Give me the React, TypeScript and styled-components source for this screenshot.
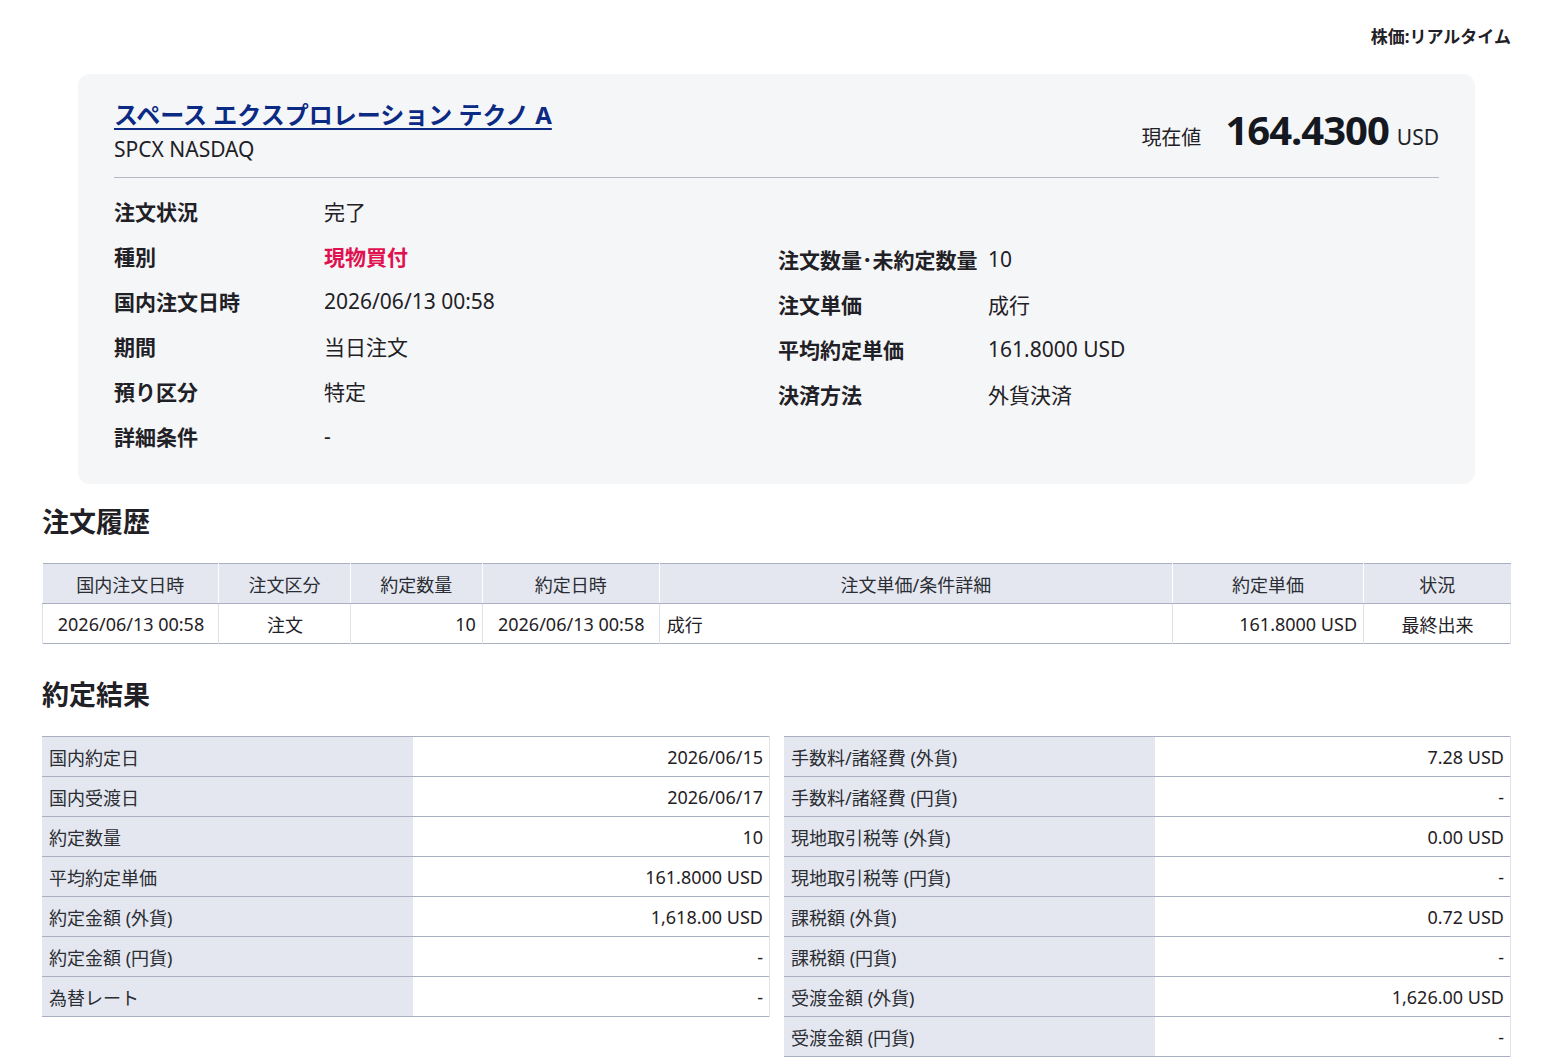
import React from "react";
import styled, { createGlobalStyle } from "styled-components";

const Global = createGlobalStyle`
  html, body { margin: 0; padding: 0; background: #ffffff; }
  body {
    font-family: "Noto Sans", "Noto Sans CJK JP", sans-serif;
    color: #1f2126;
  }
  * { box-sizing: border-box; }
`;

const Page = styled.div`
  padding: 23px 38px 0 42px;
`;

const TopBar = styled.div`
  display: flex;
  justify-content: flex-end;
  font-size: 17px;
  font-weight: 700;
  line-height: 28px;
  color: #1f2126;
`;

const Card = styled.section`
  margin: 23px 36px 0;
  background: #f5f6f8;
  border-radius: 12px;
  padding: 24px 36px 26px;
`;

const CardHead = styled.div`
  display: flex;
  justify-content: space-between;
  align-items: center;
  padding-bottom: 14px;
  border-bottom: 1px solid #b6b9c2;
`;

const NameBlock = styled.div`
  display: flex;
  flex-direction: column;
`;

const StockName = styled.a`
  font-size: 24px;
  font-weight: 700;
  line-height: 34px;
  color: #0b2a84;
  text-decoration: underline;
  text-underline-offset: 4px;
  text-decoration-thickness: 2px;
  cursor: pointer;
`;

const Ticker = styled.div`
  font-size: 21px;
  line-height: 28px;
  margin-top: 3px;
  color: #1f2126;
`;

const PriceBlock = styled.div`
  display: flex;
  align-items: baseline;
  margin-top: -3px;
`;

const PriceLabel = styled.span`
  font-size: 20px;
  margin-right: 24px;
`;

const PriceValue = styled.span`
  font-size: 40px;
  font-weight: 700;
  letter-spacing: -1px;
  color: #141821;
`;

const PriceUnit = styled.span`
  font-size: 21px;
  margin-left: 8px;
`;

const InfoGrid = styled.div`
  display: grid;
  grid-template-columns: 664px 1fr;
  padding-top: 10px;
`;

const InfoCol = styled.div<{ $offset?: number }>`
  display: flex;
  flex-direction: column;
  padding-top: ${(p) => p.$offset ?? 0}px;
`;

const InfoRow = styled.div`
  display: grid;
  grid-template-columns: 210px 1fr;
  align-items: center;
  height: 45px;
  font-size: 21px;
`;

const InfoLabel = styled.div`
  font-weight: 700;
  white-space: nowrap;
`;

const InfoValue = styled.div<{ $accent?: boolean }>`
  color: ${(p) => (p.$accent ? "#e0114f" : "#1f2126")};
  font-weight: ${(p) => (p.$accent ? 700 : 400)};
`;

const SectionTitle = styled.h2<{ $top: number }>`
  margin: ${(p) => p.$top}px 0 23px;
  font-size: 27px;
  font-weight: 700;
  line-height: 36px;
  color: #1f2126;
`;

const HistoryTable = styled.table`
  width: 100%;
  border-collapse: collapse;
  font-size: 18px;
  border-top: 1px solid #a9afc1;
  border-bottom: 1px solid #a9afc1;
`;

const Th = styled.th`
  background: #e4e7ef;
  font-weight: 400;
  height: 40px;
  padding: 0 6px;
  color: #2a2d33;
  border-bottom: 1px solid #a9afc1;
  border-left: 1px solid #ffffff;
  &:first-child { border-left: none; }
`;

const Td = styled.td<{ $align?: "left" | "center" | "right" }>`
  height: 40px;
  padding: 0 6px 0 7px;
  text-align: ${(p) => p.$align ?? "center"};
  border-left: 1px solid #dfe2e9;
  &:first-child { border-left: 1px solid #dfe2e9; }
  &:last-child { border-right: 1px solid #dfe2e9; }
  white-space: nowrap;
`;

const ResultGrid = styled.div`
  display: grid;
  grid-template-columns: 728px 727px;
  justify-content: space-between;
  align-items: start;
`;

const ResultTable = styled.table`
  width: 100%;
  border-collapse: collapse;
  font-size: 18px;
  border-top: 1px solid #a9afc1;
`;

const ResultRow = styled.tr`
  border-bottom: 1px solid #a9afc1;
`;

const ResultLabel = styled.th`
  width: 371px;
  background: #e4e7ef;
  font-weight: 400;
  text-align: left;
  height: 40px;
  padding: 0 7px;
  color: #2a2d33;
  white-space: nowrap;
`;

const ResultValue = styled.td`
  text-align: right;
  padding: 0 6px 0 7px;
  height: 40px;
  border-right: 1px solid #dfe2e9;
  white-space: nowrap;
`;

const leftInfo: [string, string, boolean?][] = [
  ["注文状況", "完了"],
  ["種別", "現物買付", true],
  ["国内注文日時", "2026/06/13 00:58"],
  ["期間", "当日注文"],
  ["預り区分", "特定"],
  ["詳細条件", "-"],
];

const rightInfo: [string, string][] = [
  ["注文数量･未約定数量", "10"],
  ["注文単価", "成行"],
  ["平均約定単価", "161.8000 USD"],
  ["決済方法", "外貨決済"],
];

const resultLeft: [string, string][] = [
  ["国内約定日", "2026/06/15"],
  ["国内受渡日", "2026/06/17"],
  ["約定数量", "10"],
  ["平均約定単価", "161.8000 USD"],
  ["約定金額 (外貨)", "1,618.00 USD"],
  ["約定金額 (円貨)", "-"],
  ["為替レート", "-"],
];

const resultRight: [string, string][] = [
  ["手数料/諸経費 (外貨)", "7.28 USD"],
  ["手数料/諸経費 (円貨)", "-"],
  ["現地取引税等 (外貨)", "0.00 USD"],
  ["現地取引税等 (円貨)", "-"],
  ["課税額 (外貨)", "0.72 USD"],
  ["課税額 (円貨)", "-"],
  ["受渡金額 (外貨)", "1,626.00 USD"],
  ["受渡金額 (円貨)", "-"],
];

const historyCols = [176, 132, 132, 177, 514, 191, 147];

function Result({ rows }: { rows: [string, string][] }) {
  return (
    <ResultTable>
      <tbody>
        {rows.map(([l, v]) => (
          <ResultRow key={l}>
            <ResultLabel>{l}</ResultLabel>
            <ResultValue>{v}</ResultValue>
          </ResultRow>
        ))}
      </tbody>
    </ResultTable>
  );
}

export default function App() {
  return (
    <>
      <Global />
      <Page>
        <TopBar>株価:リアルタイム</TopBar>
        <Card>
          <CardHead>
            <NameBlock>
              <StockName>スペース エクスプロレーション テクノ A</StockName>
              <Ticker>SPCX NASDAQ</Ticker>
            </NameBlock>
            <PriceBlock>
              <PriceLabel>現在値</PriceLabel>
              <PriceValue>164.4300</PriceValue>
              <PriceUnit>USD</PriceUnit>
            </PriceBlock>
          </CardHead>
          <InfoGrid>
            <InfoCol>
              {leftInfo.map(([l, v, a]) => (
                <InfoRow key={l}>
                  <InfoLabel>{l}</InfoLabel>
                  <InfoValue $accent={a}>{v}</InfoValue>
                </InfoRow>
              ))}
            </InfoCol>
            <InfoCol $offset={48}>
              {rightInfo.map(([l, v]) => (
                <InfoRow key={l}>
                  <InfoLabel>{l}</InfoLabel>
                  <InfoValue>{v}</InfoValue>
                </InfoRow>
              ))}
            </InfoCol>
          </InfoGrid>
        </Card>

        <SectionTitle $top={20}>注文履歴</SectionTitle>
        <HistoryTable>
          <colgroup>
            {historyCols.map((w, i) => (
              <col key={i} style={{ width: w }} />
            ))}
          </colgroup>
          <thead>
            <tr>
              <Th>国内注文日時</Th>
              <Th>注文区分</Th>
              <Th>約定数量</Th>
              <Th>約定日時</Th>
              <Th>注文単価/条件詳細</Th>
              <Th>約定単価</Th>
              <Th>状況</Th>
            </tr>
          </thead>
          <tbody>
            <tr>
              <Td>2026/06/13 00:58</Td>
              <Td>注文</Td>
              <Td $align="right">10</Td>
              <Td>2026/06/13 00:58</Td>
              <Td $align="left">成行</Td>
              <Td $align="right">161.8000 USD</Td>
              <Td>最終出来</Td>
            </tr>
          </tbody>
        </HistoryTable>

        <SectionTitle $top={33}>約定結果</SectionTitle>
        <ResultGrid>
          <Result rows={resultLeft} />
          <Result rows={resultRight} />
        </ResultGrid>
      </Page>
    </>
  );
}
